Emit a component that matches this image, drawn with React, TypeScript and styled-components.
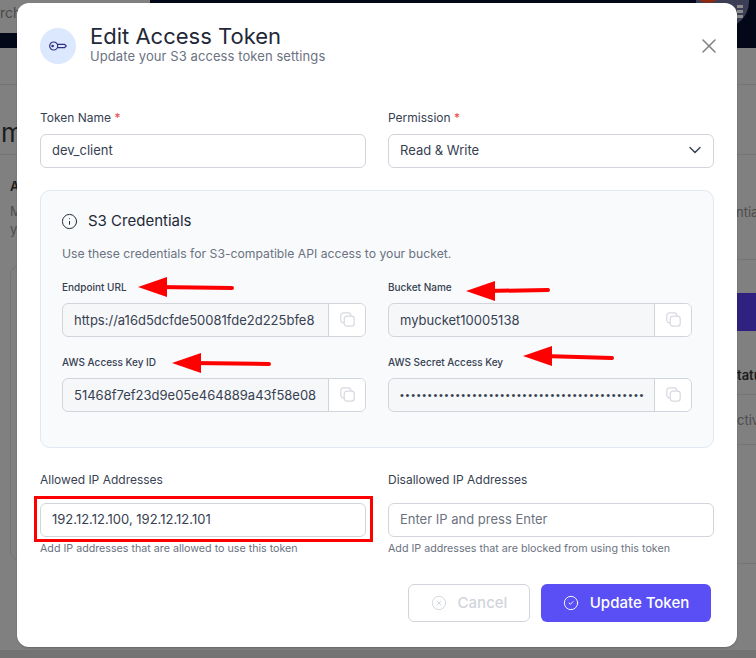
import React from 'react';
import styled, { createGlobalStyle } from 'styled-components';
import { ChevronDown, CircleCheck, CircleX, Info, X } from 'lucide-react';

const GlobalStyle = createGlobalStyle`
  html, body {
    margin: 0;
    padding: 0;
    width: 756px;
    height: 658px;
    overflow: hidden;
    background: #808080;
    font-family: Inter, 'Open Sans', sans-serif;
  }
  * { box-sizing: border-box; }
`;

const Screen = styled.div`
  position: relative;
  width: 756px;
  height: 658px;
  overflow: hidden;
  background: #808080;
  display: flex;
  flex-direction: column;
`;

/* the page behind the dialog, only its edges show */
const NavBar = styled.div`
  position: relative;
  height: 48px;
  background: #030818;
  overflow: hidden;
`;

const SearchArea = styled.div`
  width: 150px;
  height: 33px;
  background: #808080;
  padding: 5px 0 0 0;
  font-size: 14px;
  line-height: 16px;
  color: #4a4a4a;
`;

const AppsButton = styled.div`
  position: absolute;
  left: 696px;
  top: -25px;
  width: 53px;
  height: 53px;
  border-radius: 50%;
  background: #3b3e54;
`;

const Badge = styled.div`
  position: absolute;
  left: 696px;
  top: -14px;
  width: 24px;
  height: 17px;
  border-radius: 50%;
  background: #8c2a12;
`;

const AppsDots = styled.div`
  position: absolute;
  left: 737px;
  top: 5px;
  width: 6px;
  height: 13px;
  background: repeating-linear-gradient(to bottom, #8b8b8b 0 3px, transparent 3px 5px);
`;

const Body = styled.div`
  flex: 1;
  display: flex;
  justify-content: space-between;
`;

const Strip = styled.div`
  width: 19px;
  overflow: hidden;
  white-space: nowrap;
`;

const Row = styled.div<{ $h: number; $line?: boolean }>`
  height: ${({ $h }) => $h}px;
  border-bottom: ${({ $line }) => ($line ? '1px solid #747474' : 'none')};
`;

const BigText = styled.div`
  padding: 32px 0 0 1px;
  font-size: 26px;
  line-height: 32px;
  color: #1c1c1c;
`;

const EdgeText = styled.div<{ $top: number; $left: number; $strong?: boolean }>`
  padding-top: ${({ $top }) => $top}px;
  margin-left: ${({ $left }) => $left}px;
  font-size: 13px;
  line-height: 16px;
  font-weight: ${({ $strong }) => ($strong ? 600 : 400)};
  color: ${({ $strong }) => ($strong ? '#1c1c1c' : '#4d4d4d')};
`;

const BehindCard = styled.div`
  margin: 0 -20px 0 10px;
  height: 296px;
  border: 1px solid #747474;
  border-radius: 10px;
`;

const BehindButton = styled.div`
  height: 38px;
  background: #2e2180;
`;

const BottomBand = styled.div`
  height: 8px;
  background: #737373;
`;

const Modal = styled.div`
  position: absolute;
  left: 17px;
  top: 3px;
  width: 720px;
  height: 644px;
  background: #fff;
  border-radius: 12px;
  box-shadow: 0 1px 2px rgba(0, 0, 0, 0.2);
  padding: 25px 23px;
  display: flex;
  flex-direction: column;
`;

const Header = styled.div`
  display: flex;
  align-items: center;
  gap: 14px;
  height: 36px;
  margin-bottom: 46px;
`;

const IconCircle = styled.div`
  width: 36px;
  height: 36px;
  border-radius: 50%;
  background: #dbe8fe;
  color: #312e81;
  display: flex;
  align-items: center;
  justify-content: center;
`;

const Titles = styled.div`
  flex: 1;
  align-self: flex-start;
  margin-top: -4px;
`;

const Title = styled.div`
  font-size: 22px;
  line-height: 24px;
  color: #1f2937;
`;

const Subtitle = styled.div`
  margin-top: 1px;
  font-size: 13px;
  line-height: 14px;
  letter-spacing: 0.08px;
  color: #6b7280;
`;

const Close = styled.div`
  color: #808080;
  display: flex;
  margin-right: -7px;
`;

const TwoCols = styled.div`
  display: grid;
  grid-template-columns: 326px 326px;
  column-gap: 22px;
`;

const Label = styled.div`
  font-size: 12px;
  line-height: 16px;
  color: #374151;
  margin-bottom: 8px;
`;

const IpLabel = styled(Label)`
  margin-bottom: 15px;
`;

const Star = styled.span`
  color: #ef4444;
`;

const Field = styled.div<{ $muted?: boolean }>`
  height: 34px;
  border: 1px solid #d1d5db;
  border-radius: 6px;
  background: #fff;
  padding: 0 11px 2px;
  display: flex;
  align-items: center;
  justify-content: space-between;
  font-size: 13px;
  color: ${({ $muted }) => ($muted ? '#6b7280' : '#374151')};
`;

const Chevron = styled(ChevronDown)`
  margin-right: -3px;
`;

const Hint = styled.div`
  font-size: 10.7px;
  line-height: 14px;
  color: #6b7280;
  margin-top: 5px;
`;

const Panel = styled.div`
  margin-top: 22px;
  height: 258px;
  border: 1px solid #e2e8f0;
  border-radius: 10px;
  background: #f8fafc;
  padding: 21px;
`;

const PanelTitle = styled.div`
  display: flex;
  align-items: center;
  gap: 10px;
  margin-left: -1px;
  font-size: 15px;
  line-height: 18px;
  color: #1f2937;
`;

const PanelText = styled.div`
  font-size: 12.2px;
  line-height: 16px;
  color: #6b7280;
  margin-top: 16px;
`;

const CredGrid = styled.div`
  display: grid;
  grid-template-columns: 304px 304px;
  column-gap: 22px;
  row-gap: 18px;
  margin-top: 18px;
`;

const CredLabel = styled.div`
  font-size: 10px;
  line-height: 14px;
  font-weight: 500;
  color: #374151;
  margin-bottom: 9px;
`;

const CopyRow = styled.div`
  display: flex;
  height: 34px;
  border: 1px solid #d1d5db;
  border-radius: 6px;
  overflow: hidden;
  background: #f6f7f9;
`;

const CopyValue = styled.div<{ $secret?: boolean }>`
  flex: 1;
  padding: 0 11px 1px;
  display: flex;
  align-items: center;
  font-family: ${({ $secret }) => ($secret ? "'Liberation Sans', sans-serif" : 'inherit')};
  font-size: ${({ $secret }) => ($secret ? '11px' : '13px')};
  letter-spacing: ${({ $secret }) => ($secret ? '1.72px' : 'normal')};
  color: #374151;
  white-space: nowrap;
  overflow: hidden;
`;

const CopyButton = styled.div`
  width: 37px;
  flex: none;
  background: #fff;
  border-left: 1px solid #d1d5db;
  padding-bottom: 2px;
  display: flex;
  align-items: center;
  justify-content: center;
`;

const IpSection = styled(TwoCols)`
  margin-top: 24px;
`;

const Highlight = styled.div`
  position: relative;
`;

const RedBox = styled.div`
  position: absolute;
  left: -6px;
  right: -7px;
  top: -7px;
  bottom: -5px;
  border: 3px solid #f00;
  pointer-events: none;
`;

const Footer = styled.div`
  margin-top: 28px;
  display: flex;
  justify-content: flex-end;
  gap: 11px;
  padding-right: 3px;
`;

const GhostButton = styled.div`
  width: 122px;
  height: 38px;
  border: 1px solid #d1d5db;
  border-radius: 6px;
  padding-bottom: 1px;
  display: flex;
  align-items: center;
  justify-content: center;
  gap: 11px;
  font-size: 15px;
  font-weight: 500;
  color: #d1d5db;
`;

const PrimaryButton = styled.div`
  width: 170px;
  height: 38px;
  border-radius: 6px;
  background: #5a4ff5;
  padding-bottom: 1px;
  display: flex;
  align-items: center;
  justify-content: center;
  gap: 11px;
  font-size: 15px;
  font-weight: 500;
  color: #fff;
`;

const ArrowLayer = styled.svg`
  position: absolute;
  left: 0;
  top: 0;
  pointer-events: none;
`;

const KeyIcon = () => (
  <svg width="18" height="10" viewBox="0 0 18 10" fill="none" stroke="currentColor" strokeWidth="1.2" strokeLinejoin="round">
    <circle cx="4.7" cy="5" r="4" />
    <circle cx="3.6" cy="5" r="0.7" />
    <path d="M8.6 3.4H15.6L17.2 5L15.6 6.6H8.6" />
  </svg>
);

const CopyIcon = () => (
  <svg width="15" height="15" viewBox="0 0 15 15" fill="none" stroke="#d6d9df" strokeWidth="1.2">
    <rect x="0.8" y="0.8" width="10" height="10" rx="2.6" />
    <rect x="4.2" y="4.2" width="10" height="10" rx="2.6" fill="#fff" />
  </svg>
);

const arrows = [
  { tip: [138, 287], tail: [232, 288] },
  { tip: [466, 291], tail: [548, 290] },
  { tip: [172, 363], tail: [269, 364] },
  { tip: [523, 356], tail: [612, 358] },
];

const creds = [
  { label: 'Endpoint URL', value: 'https://a16d5dcfde50081fde2d225bfe8' },
  { label: 'Bucket Name', value: 'mybucket10005138' },
  { label: 'AWS Access Key ID', value: '51468f7ef23d9e05e464889a43f58e08' },
  { label: 'AWS Secret Access Key', value: '•'.repeat(44), secret: true },
];

const App = () => (
  <Screen>
    <GlobalStyle />
    <NavBar>
      <SearchArea>rch</SearchArea>
      <AppsButton />
      <Badge />
      <AppsDots />
    </NavBar>
    <Body>
      <Strip>
        <Row $h={37} $line />
        <Row $h={70} $line>
          <BigText>m</BigText>
        </Row>
        <Row $h={110}>
          <EdgeText $top={23} $left={10} $strong>
            A
          </EdgeText>
          <EdgeText $top={9} $left={10}>
            M
          </EdgeText>
          <EdgeText $top={2} $left={10}>
            y
          </EdgeText>
        </Row>
        <BehindCard />
      </Strip>
      <Strip>
        <Row $h={37} $line />
        <Row $h={70} $line />
        <Row $h={105} $line>
          <EdgeText $top={49} $left={-1}>
            ntial
          </EdgeText>
        </Row>
        <Row $h={33} />
        <BehindButton />
        <Row $h={64} $line>
          <EdgeText $top={36} $left={0} $strong>
            tatus
          </EdgeText>
        </Row>
        <Row $h={50} $line>
          <EdgeText $top={17} $left={0}>
            ctive
          </EdgeText>
        </Row>
        <Row $h={119} $line />
      </Strip>
    </Body>
    <BottomBand />
    <Modal>
      <Header>
        <IconCircle>
          <KeyIcon />
        </IconCircle>
        <Titles>
          <Title>Edit Access Token</Title>
          <Subtitle>Update your S3 access token settings</Subtitle>
        </Titles>
        <Close>
          <X size={24} strokeWidth={1.5} />
        </Close>
      </Header>
      <TwoCols>
        <div>
          <Label>
            Token Name <Star>*</Star>
          </Label>
          <Field>dev_client</Field>
        </div>
        <div>
          <Label>
            Permission <Star>*</Star>
          </Label>
          <Field>
            Read &amp; Write
            <Chevron size={20} strokeWidth={1.7} />
          </Field>
        </div>
      </TwoCols>
      <Panel>
        <PanelTitle>
          <Info size={17} strokeWidth={1.4} />
          S3 Credentials
        </PanelTitle>
        <PanelText>Use these credentials for S3-compatible API access to your bucket.</PanelText>
        <CredGrid>
          {creds.map(({ label, value, secret }) => (
            <div key={label}>
              <CredLabel>{label}</CredLabel>
              <CopyRow>
                <CopyValue $secret={secret}>{value}</CopyValue>
                <CopyButton>
                  <CopyIcon />
                </CopyButton>
              </CopyRow>
            </div>
          ))}
        </CredGrid>
      </Panel>
      <IpSection>
        <div>
          <IpLabel>Allowed IP Addresses</IpLabel>
          <Highlight>
            <Field>192.12.12.100, 192.12.12.101</Field>
            <RedBox />
          </Highlight>
          <Hint>Add IP addresses that are allowed to use this token</Hint>
        </div>
        <div>
          <IpLabel>Disallowed IP Addresses</IpLabel>
          <Field $muted>Enter IP and press Enter</Field>
          <Hint>Add IP addresses that are blocked from using this token</Hint>
        </div>
      </IpSection>
      <Footer>
        <GhostButton>
          <CircleX size={16} strokeWidth={1.4} />
          Cancel
        </GhostButton>
        <PrimaryButton>
          <CircleCheck size={16} strokeWidth={1.4} />
          Update Token
        </PrimaryButton>
      </Footer>
    </Modal>
    <ArrowLayer width="756" height="658">
      {arrows.map(({ tip: [tx, ty], tail: [ex, ey] }) => (
        <g key={tx}>
          <line x1={tx + 20} y1={ty} x2={ex} y2={ey} stroke="#f00" strokeWidth="4" strokeLinecap="round" />
          <polygon points={`${tx},${ty} ${tx + 29},${ty - 10} ${tx + 29},${ty + 10}`} fill="#f00" />
        </g>
      ))}
    </ArrowLayer>
  </Screen>
);

export default App;
